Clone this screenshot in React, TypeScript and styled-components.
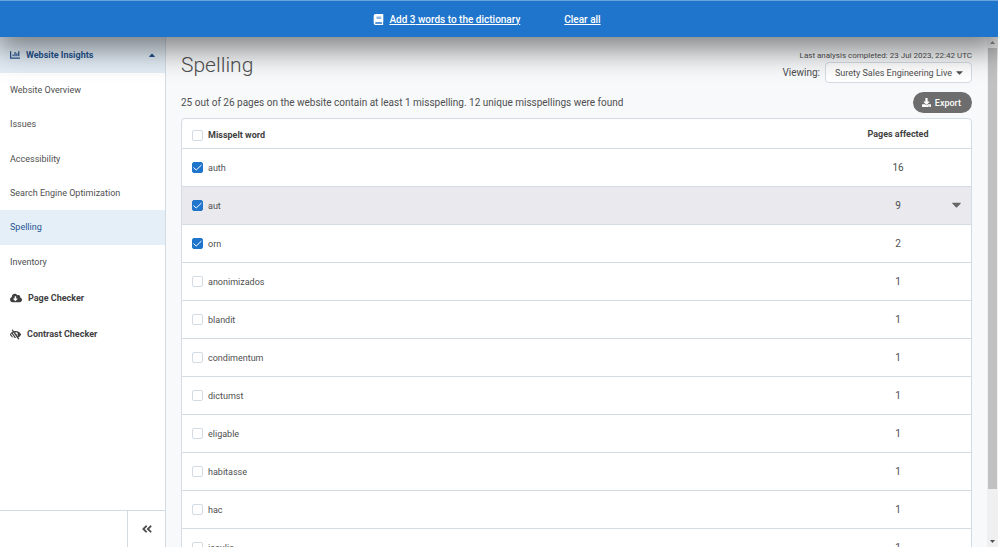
import React, { useState } from "react";
import styled, { createGlobalStyle } from "styled-components";
import {
  FaAngleDoubleLeft,
  FaBook,
  FaCaretDown,
  FaCaretUp,
  FaChartBar,
  FaCloudDownloadAlt,
  FaDownload,
  FaLowVision,
} from "react-icons/fa";

const color = {
  blue: "#1f75cb",
  navy: "#255692",
  text: "#4f4f4f",
  strong: "#3f3f3f",
  line: "#d3dbe4",
  tint: "#e5eff8",
  page: "#f7f9fb",
};

const GlobalStyle = createGlobalStyle`
  *, *::before, *::after { box-sizing: border-box; }
  body {
    margin: 0;
    overflow: hidden;
    font-family: Roboto, "Liberation Sans", sans-serif;
    font-size: 9px;
    color: ${color.text};
  }
  button, input, select { font: inherit; color: inherit; }
  button { cursor: pointer; }
`;

const Page = styled.div`
  display: flex;
  flex-direction: column;
  height: 100vh;
  background: ${color.page};
`;

const ActionBar = styled.header`
  position: relative;
  z-index: 1;
  flex: none;
  display: flex;
  justify-content: center;
  align-items: center;
  gap: 44px;
  height: 37px;
  padding-right: 24px;
  border-top: 1px solid #6ba3dd;
  background: ${color.blue};
  box-shadow: 0 8px 30px 4px rgba(0, 0, 0, 0.5);
`;

const BarButton = styled.button`
  display: flex;
  align-items: center;
  gap: 5px;
  padding: 0;
  border: 0;
  background: none;
  color: #fff;
  font-size: 10px;
  font-weight: 500;

  span {
    text-decoration: underline;
  }
`;

const Body = styled.div`
  flex: 1;
  display: flex;
  min-height: 0;
`;

const Sidebar = styled.nav`
  flex: none;
  display: flex;
  flex-direction: column;
  width: 166px;
  border-right: 1px solid ${color.line};
  background: #fff;
`;

const SectionButton = styled.button`
  display: flex;
  align-items: center;
  gap: 6px;
  height: 36px;
  padding: 0 8px 0 10px;
  border: 0;
  background: ${color.tint};
  color: ${color.navy};
  font-weight: 700;

  span {
    flex: 1;
    text-align: left;
  }
`;

const SubNav = styled.ul`
  display: grid;
  grid-auto-rows: 1fr;
  height: 206px;
  margin: 0 0 1px;
  padding: 0;
  list-style: none;
`;

const SubLink = styled.a<{ $active: boolean }>`
  display: flex;
  align-items: center;
  height: 100%;
  padding: 0 10px;
  background: ${(p) => (p.$active ? color.tint : "transparent")};
  color: ${(p) => (p.$active ? color.navy : color.text)};
  text-decoration: none;
`;

const ToolLink = styled.a`
  display: flex;
  align-items: center;
  gap: 6px;
  height: 36px;
  padding: 0 10px;
  color: ${color.strong};
  font-weight: 700;
  text-decoration: none;
`;

const SidebarFooter = styled.div`
  display: flex;
  justify-content: flex-end;
  height: 37px;
  margin-top: auto;
  border-top: 1px solid ${color.line};
`;

const CollapseButton = styled.button`
  display: flex;
  align-items: center;
  justify-content: center;
  width: 38px;
  padding: 0;
  border: 0;
  border-left: 1px solid ${color.line};
  background: none;
`;

const Main = styled.main`
  flex: 1;
  min-width: 0;
  overflow: hidden;
  padding: 12px 15px 0;
`;

const Heading = styled.div`
  display: flex;
  justify-content: space-between;
`;

const Title = styled.h1`
  margin: 0;
  font-size: 21px;
  line-height: 32px;
  font-weight: 300;
`;

const Meta = styled.div`
  display: flex;
  flex-direction: column;
  align-items: flex-end;
`;

const Stamp = styled.div`
  font-size: 8px;
  line-height: 13px;
`;

const Viewing = styled.label`
  display: flex;
  align-items: center;
  gap: 5px;
  font-size: 10px;
`;

const SelectBox = styled.span`
  display: grid;
  align-items: center;
  width: 147px;
  height: 21px;

  > * {
    grid-area: 1 / 1;
  }

  svg {
    justify-self: end;
    margin-right: 7px;
    pointer-events: none;
  }
`;

const Select = styled.select`
  appearance: none;
  width: 100%;
  height: 100%;
  padding: 0 0 0 9px;
  border: 1px solid ${color.line};
  border-radius: 4px;
  background: #fff;
  font-size: 9px;
`;

const Summary = styled.div`
  display: flex;
  justify-content: space-between;
  align-items: center;
  margin: 9px 0 5px;
  font-size: 10px;
`;

const ExportButton = styled.button`
  display: flex;
  align-items: center;
  gap: 4px;
  height: 21px;
  padding: 0 11px 0 9px;
  border: 0;
  border-radius: 11px;
  background: #6d6d6d;
  color: #fff;
  font-size: 9px;
  font-weight: 500;
`;

const TableFrame = styled.div`
  border: 1px solid ${color.line};
  border-radius: 4px;
  background: #fff;
  overflow: hidden;
`;

const Table = styled.table`
  width: 100%;
  border-collapse: separate;
  border-spacing: 0;
  table-layout: fixed;
`;

const HeadCell = styled.th<{ $width?: number; $center?: boolean }>`
  width: ${(p) => (p.$width ? `${p.$width}px` : "auto")};
  height: 30px;
  padding: ${(p) => (p.$center ? "0" : "3px 10px 0")};
  border-bottom: 1px solid ${color.line};
  color: ${color.strong};
  font-weight: 700;
  text-align: ${(p) => (p.$center ? "center" : "left")};
`;

const Row = styled.tr<{ $hovered: boolean }>`
  background: ${(p) => (p.$hovered ? "#e9e9ee" : "#fff")};
`;

const Cell = styled.td<{ $count?: boolean }>`
  height: 38px;
  padding: ${(p) => (p.$count ? "0" : "0 10px")};
  border-bottom: 1px solid ${color.line};
  font-size: ${(p) => (p.$count ? 10 : 9)}px;
  text-align: ${(p) => (p.$count ? "center" : "left")};
`;

const CheckLabel = styled.label`
  display: flex;
  align-items: center;
  gap: 5px;
`;

const TickWrap = styled.span`
  display: grid;
  width: 11px;
  height: 11px;

  > * {
    grid-area: 1 / 1;
  }

  svg {
    pointer-events: none;
  }
`;

const TickInput = styled.input`
  appearance: none;
  width: 11px;
  height: 11px;
  margin: 0;
  border: 1px solid ${color.line};
  border-radius: 2px;
  background: #fff;

  &:checked {
    border-color: ${color.blue};
    background: ${color.blue};
  }
`;

const RowMenu = styled.button`
  display: block;
  padding: 0;
  border: 0;
  background: none;
  color: #666;
`;

const ScrollTrack = styled.div`
  flex: none;
  display: flex;
  flex-direction: column;
  width: 11px;
  background: #f0f0f0;
`;

const ScrollArrow = styled.div`
  display: flex;
  align-items: center;
  justify-content: center;
  height: 11px;
`;

const ScrollThumb = styled.div`
  flex: 441;
  margin: 0 1px;
  background: #c1c1c1;
`;

const ScrollRest = styled.div`
  flex: 47;
`;

function Tick(props: { checked: boolean; onChange: () => void }) {
  return (
    <TickWrap>
      <TickInput type="checkbox" checked={props.checked} onChange={props.onChange} />
      {props.checked && (
        <svg width="11" height="11" viewBox="0 0 11 11" fill="none" stroke="#fff">
          <path d="M1.5 5.5 4.2 8 9.5 3" />
        </svg>
      )}
    </TickWrap>
  );
}

const pages = [
  "Website Overview",
  "Issues",
  "Accessibility",
  "Search Engine Optimization",
  "Spelling",
  "Inventory",
];

const words: [string, number][] = [
  ["auth", 16],
  ["aut", 9],
  ["orn", 2],
  ["anonimizados", 1],
  ["blandit", 1],
  ["condimentum", 1],
  ["dictumst", 1],
  ["eligable", 1],
  ["habitasse", 1],
  ["hac", 1],
  ["iaculis", 1],
];

export default function App() {
  const [selected, setSelected] = useState<string[]>(["auth", "aut", "orn"]);
  const [hovered, setHovered] = useState("aut");
  const all = selected.length === words.length;

  const toggle = (word: string) =>
    setSelected((s) => (s.includes(word) ? s.filter((w) => w !== word) : [...s, word]));

  return (
    <Page>
      <GlobalStyle />
      <ActionBar>
        <BarButton>
          <FaBook size={11} />
          <span>Add {selected.length} words to the dictionary</span>
        </BarButton>
        <BarButton onClick={() => setSelected([])}>
          <span>Clear all</span>
        </BarButton>
      </ActionBar>
      <Body>
        <Sidebar>
          <SectionButton>
            <FaChartBar size={10} />
            <span>Website Insights</span>
            <FaCaretUp size={10} />
          </SectionButton>
          <SubNav>
            {pages.map((name) => (
              <li key={name}>
                <SubLink href="#" $active={name === "Spelling"}>
                  {name}
                </SubLink>
              </li>
            ))}
          </SubNav>
          <ToolLink href="#">
            <FaCloudDownloadAlt size={12} />
            Page Checker
          </ToolLink>
          <ToolLink href="#">
            <FaLowVision size={11} />
            Contrast Checker
          </ToolLink>
          <SidebarFooter>
            <CollapseButton aria-label="Collapse sidebar">
              <FaAngleDoubleLeft size={12} />
            </CollapseButton>
          </SidebarFooter>
        </Sidebar>
        <Main>
          <Heading>
            <Title>Spelling</Title>
            <Meta>
              <Stamp>Last analysis completed: 23 Jul 2023, 22:42 UTC</Stamp>
              <Viewing>
                Viewing:
                <SelectBox>
                  <Select>
                    <option>Surety Sales Engineering Live</option>
                  </Select>
                  <FaCaretDown size={11} />
                </SelectBox>
              </Viewing>
            </Meta>
          </Heading>
          <Summary>
            25 out of 26 pages on the website contain at least 1 misspelling. 12 unique
            misspellings were found
            <ExportButton>
              <FaDownload size={9} />
              Export
            </ExportButton>
          </Summary>
          <TableFrame>
            <Table>
              <thead>
                <tr>
                  <HeadCell>
                    <CheckLabel>
                      <Tick
                        checked={all}
                        onChange={() => setSelected(all ? [] : words.map(([w]) => w))}
                      />
                      Misspelt word
                    </CheckLabel>
                  </HeadCell>
                  <HeadCell $width={82} $center>
                    Pages affected
                  </HeadCell>
                  <HeadCell $width={32} aria-label="Actions" />
                </tr>
              </thead>
              <tbody>
                {words.map(([word, count]) => (
                  <Row
                    key={word}
                    $hovered={hovered === word}
                    onMouseEnter={() => setHovered(word)}
                  >
                    <Cell>
                      <CheckLabel>
                        <Tick checked={selected.includes(word)} onChange={() => toggle(word)} />
                        {word}
                      </CheckLabel>
                    </Cell>
                    <Cell $count>{count}</Cell>
                    <Cell>
                      {hovered === word && (
                        <RowMenu aria-label={`Actions for ${word}`}>
                          <FaCaretDown size={15} />
                        </RowMenu>
                      )}
                    </Cell>
                  </Row>
                ))}
              </tbody>
            </Table>
          </TableFrame>
        </Main>
        <ScrollTrack aria-hidden>
          <ScrollArrow>
            <svg width="5" height="3" viewBox="0 0 5 3" fill="#8a8a8a">
              <path d="M0 3 2.5 0 5 3z" />
            </svg>
          </ScrollArrow>
          <ScrollThumb />
          <ScrollRest />
          <ScrollArrow>
            <svg width="5" height="3" viewBox="0 0 5 3" fill="#505050">
              <path d="M0 0 2.5 3 5 0z" />
            </svg>
          </ScrollArrow>
        </ScrollTrack>
      </Body>
    </Page>
  );
}
